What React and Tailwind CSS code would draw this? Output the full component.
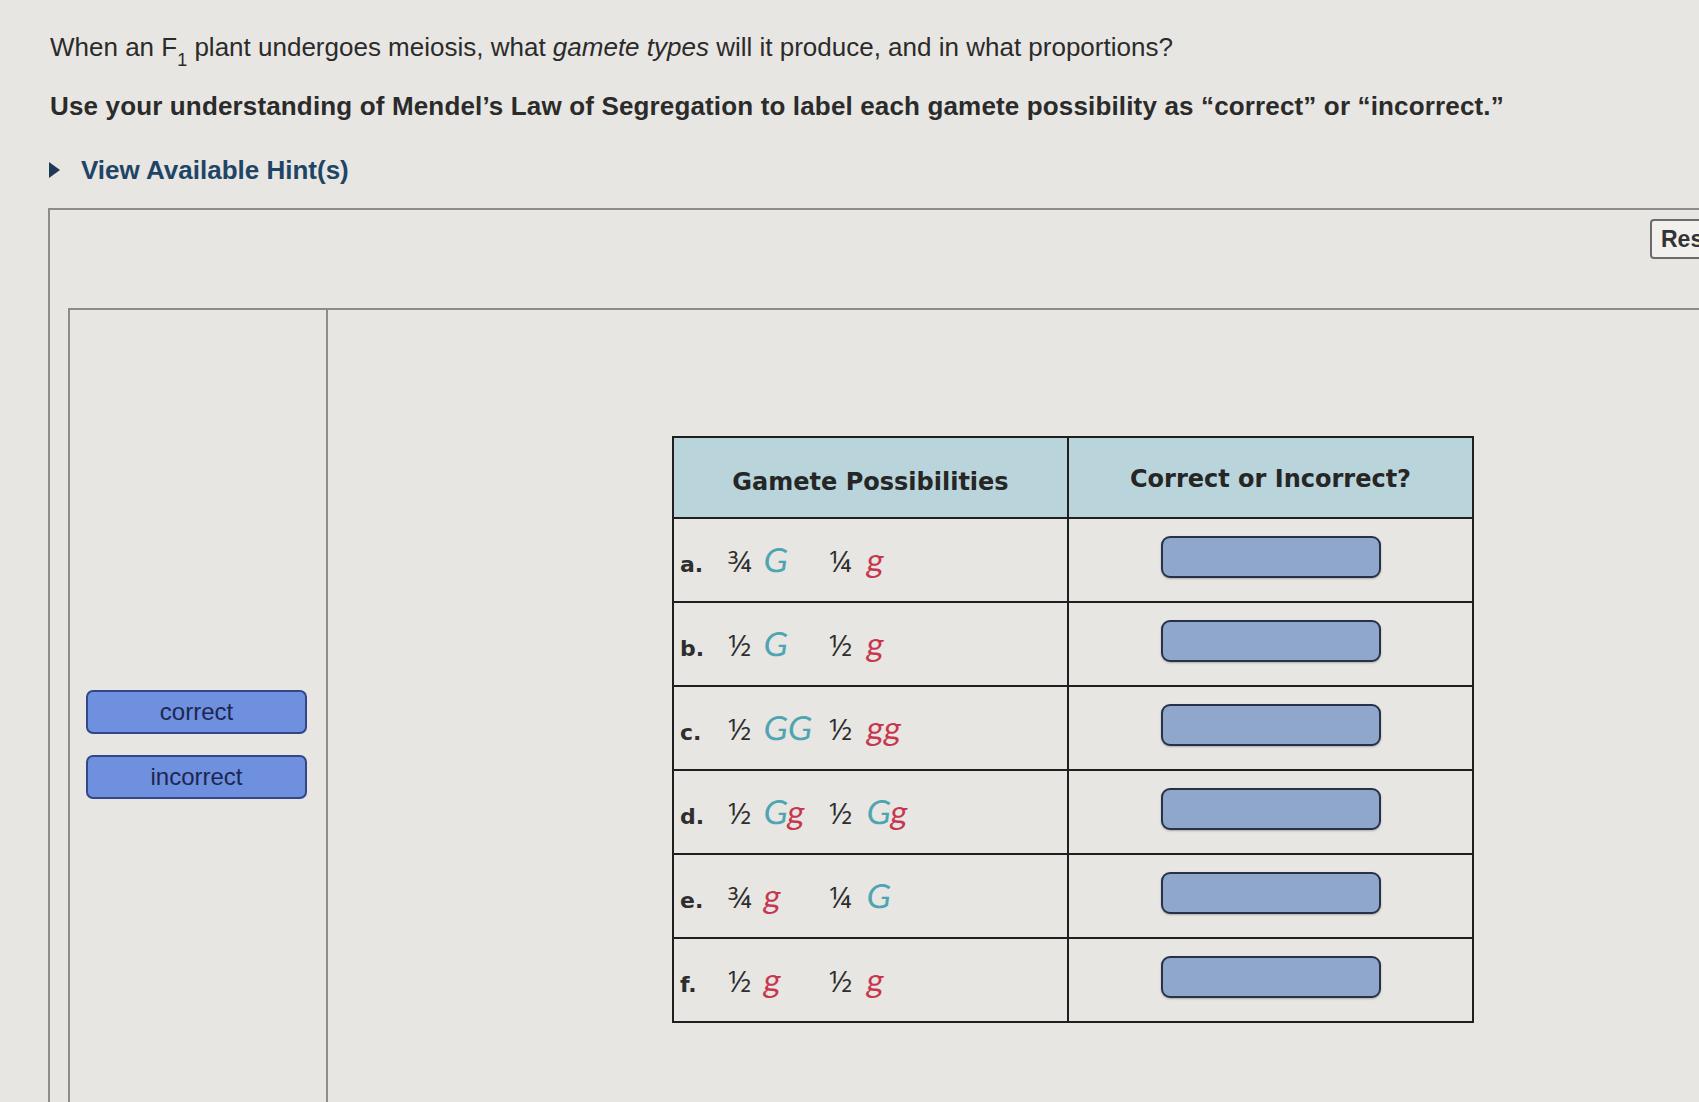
import React from 'react'

// gamete rows: label, [fraction, alleles] pairs
const ROWS = [
  { label: 'a.', parts: [['¾', 'G'], ['¼', 'g']] },
  { label: 'b.', parts: [['½', 'G'], ['½', 'g']] },
  { label: 'c.', parts: [['½', 'GG'], ['½', 'gg']] },
  { label: 'd.', parts: [['½', 'Gg'], ['½', 'Gg']] },
  { label: 'e.', parts: [['¾', 'g'], ['¼', 'G']] },
  { label: 'f.', parts: [['½', 'g'], ['½', 'g']] },
]

function Allele({ text }) {
  return (
    <span className="inline-block -skew-x-[8deg]">
      {text.split('').map((ch, i) => (
        <span key={i} className={ch === 'G' ? 'text-[#4ea5b2]' : 'text-[#c7364f]'}>{ch}</span>
      ))}
    </span>
  )
}

function DropZone() {
  return (
    <div className="mx-auto -mt-[6px] w-[220px] h-[42px] rounded-[9px] border-2 border-[#27324a] bg-[#8fa7ca] shadow-[0_1px_2px_rgba(0,0,0,0.25)]" />
  )
}

function LabelButton({ children }) {
  return (
    <div className="w-[221px] h-[44px] rounded-[7px] border-2 border-[#334687] bg-[#6f8fdf] flex items-center justify-center text-[24px] text-[#1b2752] font-['Liberation_Sans',Arial,sans-serif]">
      {children}
    </div>
  )
}

export default function App() {
  return (
    <div className="w-[1699px] h-[1102px] overflow-hidden bg-[#e8e6e2] pl-[50px] pt-[32px] text-[#2b2b2b] font-['Liberation_Sans',Arial,sans-serif]">
      <p className="text-[26px] leading-[30px]">
        When an F<sub className="text-[18px] align-[-5px]">1</sub> plant undergoes meiosis, what <i>gamete types</i> will it produce, and in what proportions?
      </p>
      <p className="mt-[29px] text-[26px] leading-[30px] font-bold tracking-[0.15px]">
        Use your understanding of Mendel’s Law of Segregation to label each gamete possibility as “correct” or “incorrect.”
      </p>
      <div className="mt-[34px] flex items-center h-[30px] -ml-[2px]">
        <svg width="13" height="18" viewBox="0 0 13 18" className="mr-[20px]">
          <path d="M1 1 L12 9 L1 17 Z" fill="#1e3a57" />
        </svg>
        <span className="text-[26px] font-bold text-[#1f4566]">View Available Hint(s)</span>
      </div>

      {/* activity panel */}
      <div className="mt-[23px] -ml-[2px] w-[1720px] h-[920px] border-l-2 border-t-2 border-[#8d8c8a]">
        <div className="h-[98px] flex justify-end items-start pt-[9px] pr-[18px]">
          <div className="w-[100px] h-[40px] rounded-[4px] border-2 border-[#6b6b6b] bg-[#f1f0ed] flex items-center pl-[9px] text-[23px] text-[#333] font-bold">
            Reset
          </div>
        </div>

        <div className="ml-[18px] h-[820px] flex border-l-2 border-t-2 border-[#8d8c8a]">
          {/* label bank */}
          <div className="w-[258px] shrink-0 border-r-2 border-[#8d8c8a] pt-[380px] pl-[16px] flex flex-col gap-[21px]">
            <LabelButton>correct</LabelButton>
            <LabelButton>incorrect</LabelButton>
          </div>

          {/* target table */}
          <div className="pl-[344px] pt-[126px]">
            <table className="border-collapse border-2 border-[#1f1f1f]">
              <thead>
                <tr className="h-[81px] bg-[#b9d5db]">
                  <th className="w-[395px] border-2 border-[#1f1f1f] text-[24px] font-bold text-[#262626] font-['DejaVu_Sans',Verdana,sans-serif] pt-[8px]">
                    Gamete Possibilities
                  </th>
                  <th className="w-[405px] border-2 border-[#1f1f1f] text-[24px] font-bold text-[#262626] font-['DejaVu_Sans',Verdana,sans-serif] pt-[2px]">
                    Correct or Incorrect?
                  </th>
                </tr>
              </thead>
              <tbody>
                {ROWS.map((row) => (
                  <tr key={row.label} className="h-[84px]">
                    <td className="border-2 border-[#1f1f1f] pl-[6px]">
                      <div className="flex items-baseline text-[#2e2e2e]">
                        <span className="w-[48px] text-[22px] font-bold font-['DejaVu_Sans',Verdana,sans-serif]">{row.label}</span>
                        <span className="w-[36px] text-[30px] tracking-[-1px] font-['Open_Sans','Lato',sans-serif]">{row.parts[0][0]}</span>
                        <span className="w-[65px] text-[33px] font-['Lato','Roboto',sans-serif]"><Allele text={row.parts[0][1]} /></span>
                        <span className="w-[38px] text-[30px] tracking-[-1px] font-['Open_Sans','Lato',sans-serif]">{row.parts[1][0]}</span>
                        <span className="text-[33px] font-['Lato','Roboto',sans-serif]"><Allele text={row.parts[1][1]} /></span>
                      </div>
                    </td>
                    <td className="border-2 border-[#1f1f1f]">
                      <DropZone />
                    </td>
                  </tr>
                ))}
              </tbody>
            </table>
          </div>
        </div>
      </div>
    </div>
  )
}
